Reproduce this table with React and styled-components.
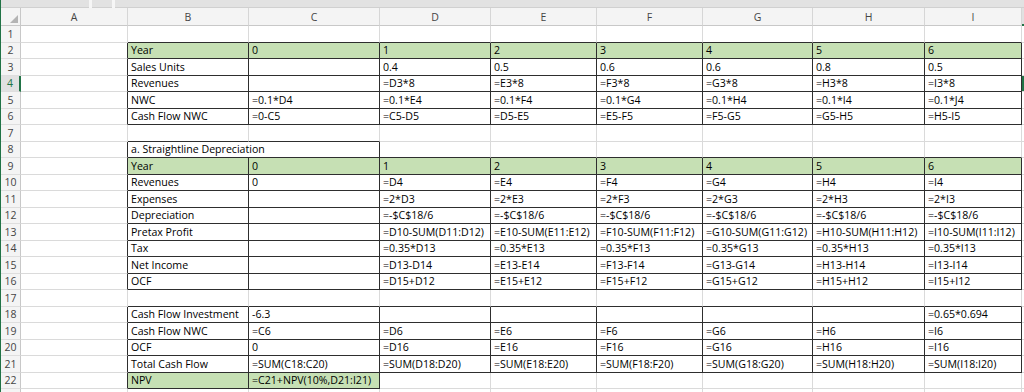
import React from 'react';
import styled, { createGlobalStyle } from 'styled-components';

const GREEN = '#c6e0b4';
const EXCEL = '#217346';
const DARK = '#2e2e2e';
const GRID = '#dadada';

const COLS = ['A', 'B', 'C', 'D', 'E', 'F', 'G', 'H', 'I', 'J'];
const ROWS = 23;
const ACTIVE = { row: 4, col: 9 };

const prev = { D: 'C', E: 'D', F: 'E', G: 'F', H: 'G', I: 'H' };
const next = { D: 'E', E: 'F', F: 'G', G: 'H', H: 'I', I: 'J' };
const across = (f) => ['D', 'E', 'F', 'G', 'H', 'I'].map(f);
const years = ['0', '1', '2', '3', '4', '5', '6'];

// cells start at column B; box = how many columns (from B) carry a border
const SHEET = {
  2: { box: 8, fill: true, cells: ['Year', ...years] },
  3: { box: 8, cells: ['Sales Units', '', '0.4', '0.5', '0.6', '0.6', '0.8', '0.5'] },
  4: { box: 8, cells: ['Revenues', '', ...across((c) => `=${c}3*8`)] },
  5: { box: 8, cells: ['NWC', '=0.1*D4', ...across((c) => `=0.1*${next[c]}4`)] },
  6: { box: 8, cells: ['Cash Flow NWC', '=0-C5', ...across((c) => `=${prev[c]}5-${c}5`)] },
  8: { box: 2, merge: true, cells: ['a. Straightline Depreciation'] },
  9: { box: 8, fill: true, cells: ['Year', ...years] },
  10: { box: 8, cells: ['Revenues', '0', ...across((c) => `=${c}4`)] },
  11: { box: 8, cells: ['Expenses', '', ...across((c) => `=2*${c}3`)] },
  12: { box: 8, cells: ['Depreciation', '', ...across(() => '=-$C$18/6')] },
  13: { box: 8, cells: ['Pretax Profit', '', ...across((c) => `=${c}10-SUM(${c}11:${c}12)`)] },
  14: { box: 8, cells: ['Tax', '', ...across((c) => `=0.35*${c}13`)] },
  15: { box: 8, cells: ['Net Income', '', ...across((c) => `=${c}13-${c}14`)] },
  16: { box: 8, cells: ['OCF', '', ...across((c) => `=${c}15+${c}12`)] },
  18: { box: 8, cells: ['Cash Flow Investment', '-6.3', '', '', '', '', '', '=0.65*0.694'] },
  19: { box: 8, cells: ['Cash Flow NWC', '=C6', ...across((c) => `=${c}6`)] },
  20: { box: 8, cells: ['OCF', '0', ...across((c) => `=${c}16`)] },
  21: { box: 8, cells: ['Total Cash Flow', '=SUM(C18:C20)', ...across((c) => `=SUM(${c}18:${c}20)`)] },
  22: { box: 2, fill: true, cells: ['NPV', '=C21+NPV(10%,D21:I21)'] },
};

const boxed = (r, ci) => {
  const row = SHEET[r];
  return !!row && ci >= 1 && ci <= row.box;
};

const GlobalStyle = createGlobalStyle`
  html, body { margin: 0; padding: 0; background: #fff; overflow: hidden; }
  body { height: 392px; }
`;

const Window = styled.div`
  height: 392px;
  border-left: 1px solid ${EXCEL};
  display: flex;
  flex-direction: column;
  font-family: 'Open Sans', 'Liberation Sans', Arial, sans-serif;
`;

const FormulaEdge = styled.div`
  height: 8px;
  flex: none;
  display: flex;
  gap: 3px;
  background: #f6f6f6;
`;

const EdgePiece = styled.div`
  width: ${(p) => (p.$w ? `${p.$w}px` : 'auto')};
  flex: ${(p) => (p.$w ? 'none' : 1)};
  background: #e2e2e2;
  border-bottom: 1px solid #d0d0d0;
`;

const Sheet = styled.div`
  flex: 1;
  display: grid;
  grid-template-columns: 20px 107px 121px 131px 111px 106px 106px 110px 112px 97px 1fr;
  grid-template-rows: 18px repeat(${ROWS}, 16.5px);
  overflow: hidden;
`;

const Corner = styled.div`
  background: #f4f4f4;
  border-right: 1px solid #c8c8c8;
  border-bottom: 1px solid #c8c8c8;
  display: flex;
  align-items: flex-end;
  justify-content: flex-end;
  padding: 0 2px 2px 0;
`;

const ColHead = styled.div`
  background: ${(p) => (p.$active ? '#e1e1e1' : '#f4f4f4')};
  border-right: 1px solid #d6d6d6;
  border-bottom: ${(p) => (p.$active ? `2px solid ${EXCEL}` : '1px solid #c8c8c8')};
  color: #444;
  font-size: 10.5px;
  display: flex;
  align-items: center;
  justify-content: center;
`;

const RowHead = styled.div`
  background: ${(p) => (p.$active ? '#e1e1e1' : '#f4f4f4')};
  border-right: ${(p) => (p.$active ? `2px solid ${EXCEL}` : '1px solid #c8c8c8')};
  border-bottom: 1px solid #dedede;
  color: ${(p) => (p.$active ? EXCEL : '#444')};
  font-size: 10.5px;
  display: flex;
  align-items: flex-end;
  justify-content: center;
  padding-bottom: 1px;
  box-sizing: border-box;
`;

const Cell = styled.div`
  grid-column: span ${(p) => p.$span};
  min-width: 0;
  box-sizing: border-box;
  display: flex;
  align-items: flex-end;
  padding: 0 2px 1px 3px;
  white-space: nowrap;
  background: ${(p) => (p.$fill ? GREEN : 'transparent')};
  border-right: 1px solid ${(p) => (p.$darkRight ? DARK : GRID)};
  border-bottom: 1px solid ${(p) => (p.$darkBottom ? DARK : GRID)};
  box-shadow: ${(p) => (p.$active ? `inset 2px 0 0 ${EXCEL}` : 'none')};
  color: #000;
  font-size: 10.6px;
  line-height: 1.2;
`;

const SelectAll = () => (
  <svg width="8" height="8" viewBox="0 0 8 8">
    <polygon points="8,0 8,8 0,8" fill="#b4b4b4" />
  </svg>
);

const SheetRow = ({ r }) => {
  const row = SHEET[r];
  const out = [
    <RowHead key="h" $active={r === ACTIVE.row}>
      {r < ROWS ? r : ''}
    </RowHead>,
  ];
  for (let ci = 0; ci < COLS.length; ci++) {
    if (row && row.merge && ci === 2) continue;
    const span = row && row.merge && ci === 1 ? 2 : 1;
    const last = ci + span - 1;
    const text = row && ci >= 1 ? row.cells[ci - 1] || '' : '';
    out.push(
      <Cell
        key={ci}
        $span={span}
        $fill={row && row.fill && ci >= 1 && ci <= row.box}
        $darkRight={boxed(r, last) || boxed(r, last + 1)}
        $darkBottom={boxed(r, ci) || boxed(r + 1, ci)}
        $active={r === ACTIVE.row && ci === ACTIVE.col}
      >
        {text}
      </Cell>
    );
  }
  return out;
};

const App = () => {
  const rows = Array.from({ length: ROWS }, (_, i) => i + 1);
  return (
    <Window>
      <GlobalStyle />
      <FormulaEdge>
        <EdgePiece $w={88} />
        <EdgePiece $w={20} />
        <EdgePiece />
      </FormulaEdge>
      <Sheet>
        <Corner>
          <SelectAll />
        </Corner>
        {COLS.map((c, i) => (
          <ColHead key={c} $active={i === ACTIVE.col}>
            {i === ACTIVE.col ? '' : c}
          </ColHead>
        ))}
        {rows.map((r) => (
          <SheetRow key={r} r={r} />
        ))}
      </Sheet>
    </Window>
  );
};

export default App;
